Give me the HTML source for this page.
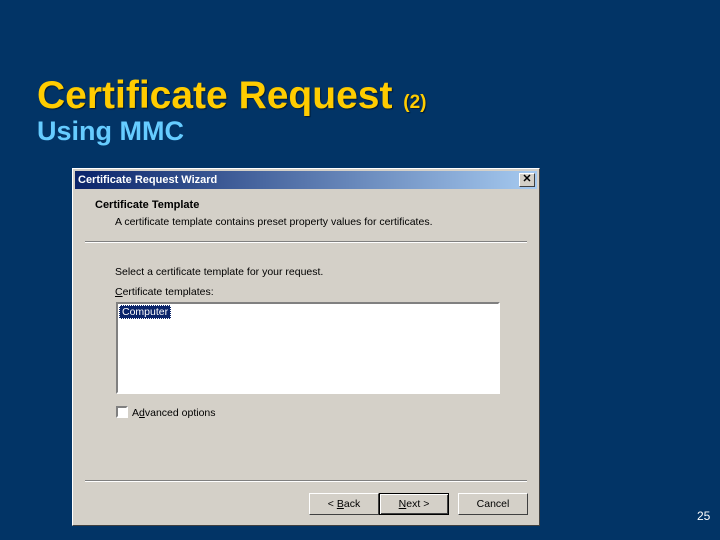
<!DOCTYPE html>
<html><head><style>
*{margin:0;padding:0;box-sizing:border-box}
body{width:720px;height:540px;background:#023466;position:relative;overflow:hidden;font-family:"Liberation Sans",sans-serif}
.t1{position:absolute;left:37px;top:74px;color:#ffcc00;font-weight:bold;font-size:39px;white-space:nowrap;text-shadow:1px 1px 1px #001a33}
.t1 span{font-size:19px}
.t2{position:absolute;left:37px;top:116px;color:#66ccff;font-weight:bold;font-size:27px;white-space:nowrap}
.dlg{position:absolute;left:72px;top:168px;width:468px;height:358px;background:#d4d0c8;border:1px solid #fff;border-right-color:#404040;border-bottom-color:#404040;font-family:"Liberation Sans",sans-serif;font-size:10.5px;color:#000}
.tb{position:absolute;left:2px;top:2px;right:2px;height:18px;background:linear-gradient(to right,#0a246a,#a6caf0);color:#fff;font-weight:bold;font-size:11px;padding:3px 0 0 3px}
.x{position:absolute;right:2px;top:2px;width:16px;height:14px;background:#d4d0c8;border:1px solid #fff;border-right-color:#404040;border-bottom-color:#404040;color:#000;font-size:11px;line-height:11px;text-align:center;font-weight:bold}
.a{position:absolute;white-space:nowrap}
.hr{position:absolute;left:12px;right:12px;height:2px;border-top:1px solid #808080;border-bottom:1px solid #fff}
.lb{position:absolute;left:43px;top:133px;width:384px;height:92px;background:#fff;border:2px solid #808080;border-right-color:#fff;border-bottom-color:#fff}
.btn{position:absolute;top:324px;height:22px;width:70px;background:#d4d0c8;border:1px solid #fff;border-right-color:#404040;border-bottom-color:#404040;text-align:center;line-height:20px}
</style></head><body>
<div class="t1">Certificate Request <span>(2)</span></div>
<div class="t2">Using MMC</div>
<div class="dlg">
<div class="tb">Certificate Request Wizard<div class="x">✕</div></div>
<div class="a" style="left:22px;top:30px;font-weight:bold;font-size:11px">Certificate Template</div>
<div class="a" style="left:42px;top:47px">A certificate template contains preset property values for certificates.</div>
<div class="hr" style="top:72px"></div>
<div class="a" style="left:42px;top:97px">Select a certificate template for your request.</div>
<div class="a" style="left:42px;top:117px"><u>C</u>ertificate templates:</div>
<div class="lb"><div class="a" style="left:1px;top:1px;background:#0a246a;color:#fff;padding:0 2px;border:1px dotted #fff">Computer</div></div>
<div class="a" style="left:43px;top:237px;width:12px;height:12px;background:#fff;border:2px solid #808080;border-right-color:#fff;border-bottom-color:#fff"></div>
<div class="a" style="left:59px;top:238px">A<u>d</u>vanced options</div>
<div class="hr" style="top:311px"></div>
<div class="btn" style="left:236px">&lt; <u>B</u>ack</div>
<div class="btn" style="left:306px;border:1px solid #000;box-shadow:inset 1px 1px #fff,inset -1px -1px #404040"><u>N</u>ext &gt;</div>
<div class="btn" style="left:385px">Cancel</div>
</div>
<div class="a" style="position:absolute;left:697px;top:509px;color:#fff;font-size:12px">25</div>
</body></html>
